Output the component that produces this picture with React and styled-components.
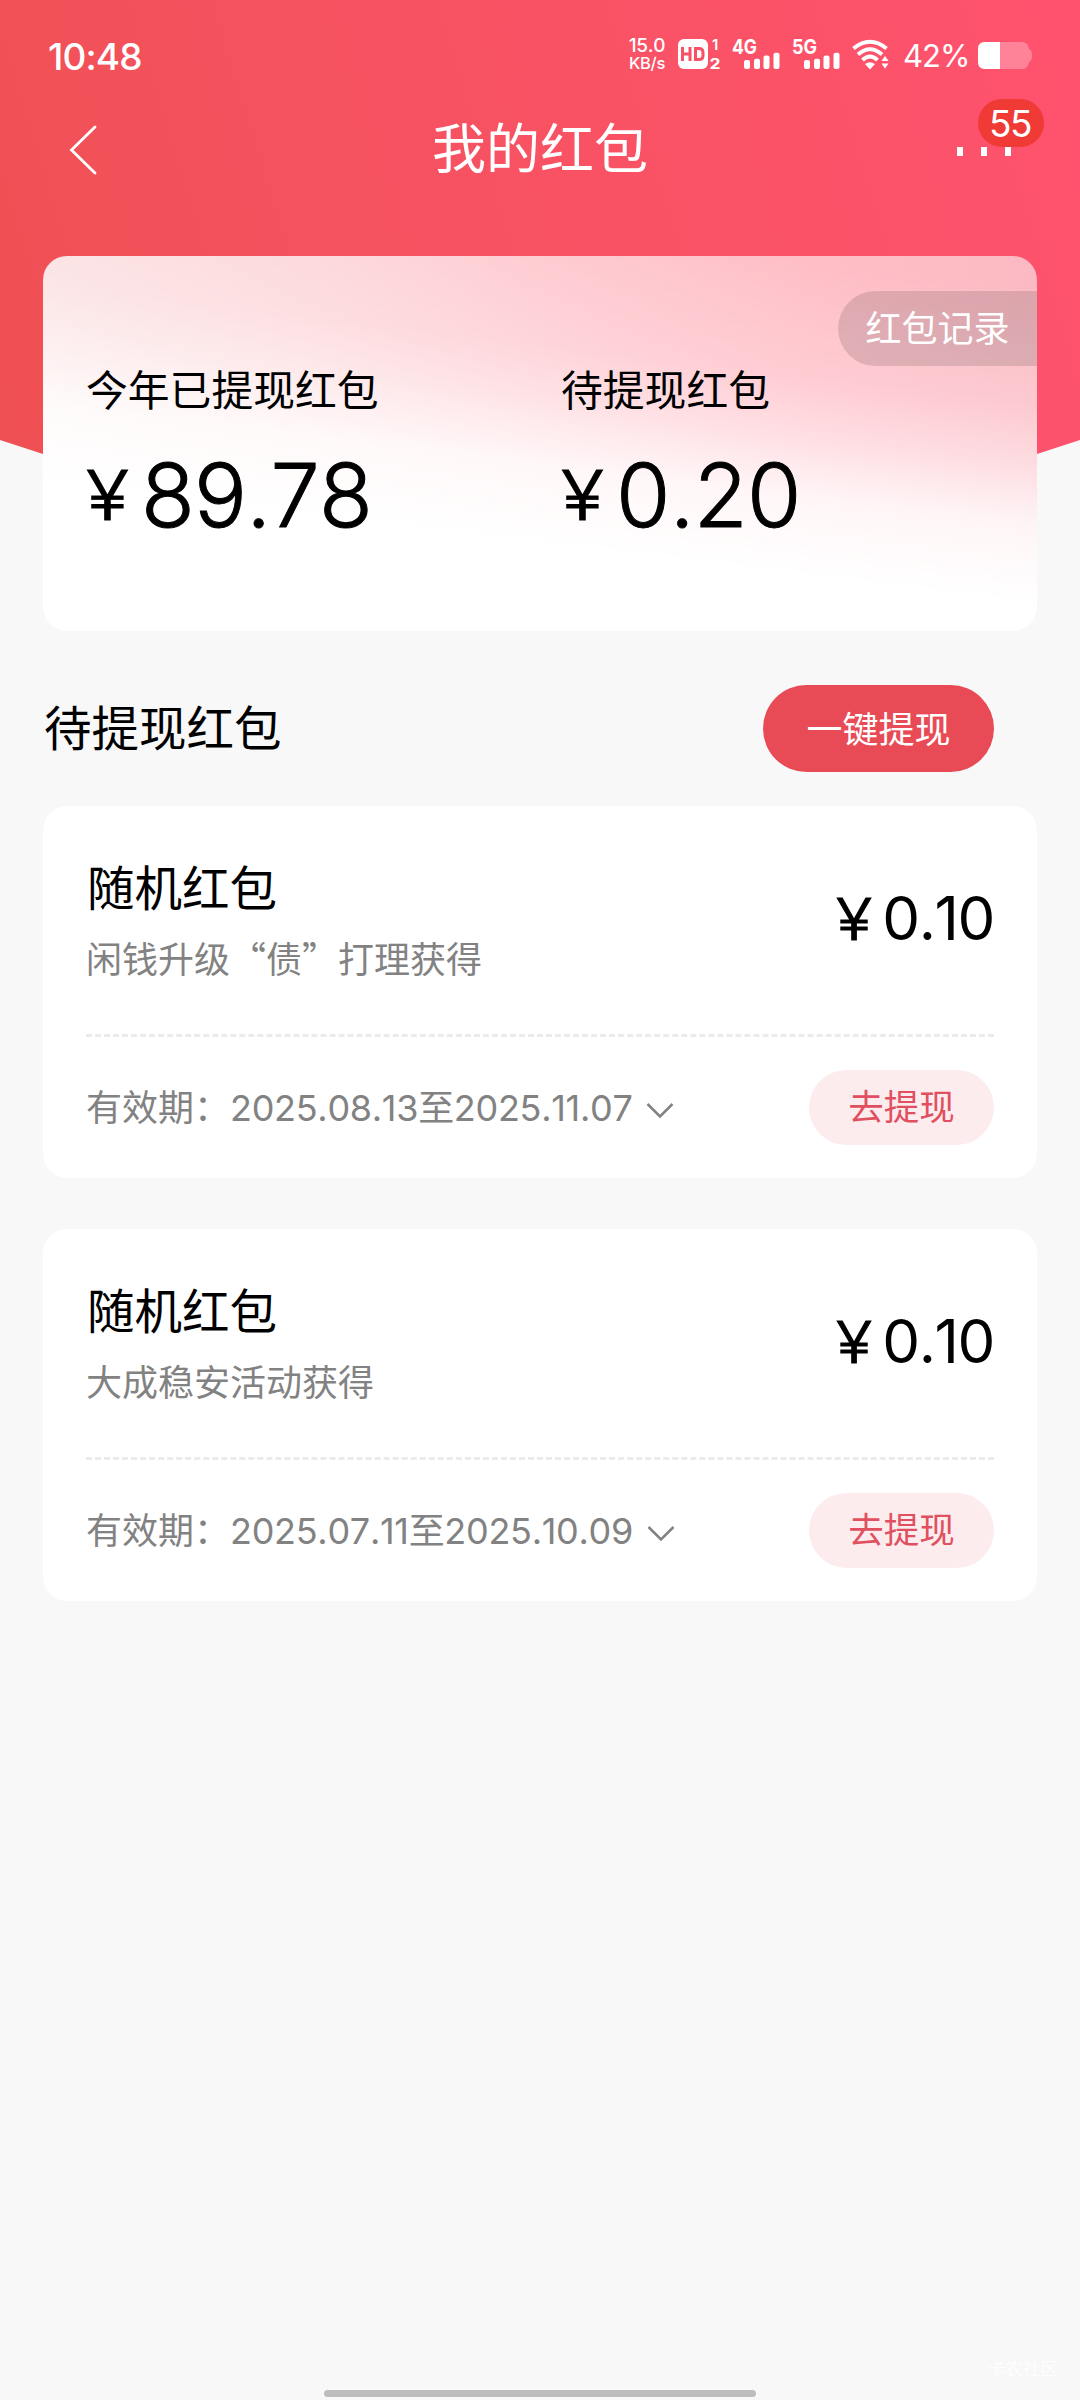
import styled, { createGlobalStyle } from "styled-components";

const GlobalStyle = createGlobalStyle`
    * {
        box-sizing: border-box;
    }

    body {
        margin: 0;
        background: #f8f8f8;
        font-family: Inter, "Noto Sans CJK SC", sans-serif;
        font-kerning: none;
        color: #000;
    }

    p, h1, h2, h3 {
        margin: 0;
        font-weight: 400;
    }

    button {
        border: none;
        padding: 0;
        font-family: inherit;
    }

    svg {
        display: block;
        overflow: visible;
    }
`;

const Page = styled.div`
    position: relative;
    width: 1080px;
    height: 2400px;
    overflow: hidden;
    display: flex;
    flex-direction: column;
    background-color: #f8f8f8;
`;

const Hero = styled.div`
    position: absolute;
    top: 0;
    left: 0;
    width: 1080px;
    height: 500px;
    background: linear-gradient(73deg, #ef5052 0%, #f4525e 30%, #fa5266 65%, #fd526b 85%, #ff526f 100%);
    clip-path: polygon(0 0, 100% 0, 100% 440px, 1037px 454px, 900px 490px, 180px 490px, 43px 454px, 0 440px);
`;

const StatusBar = styled.div`
    position: relative;
    height: 112px;
    padding: 0 48px;
    display: flex;
    justify-content: space-between;
    color: white;
`;

const Time = styled.div`
    padding-top: 34px;
    font-size: 37px;
    line-height: 46px;
    font-weight: 500;
    letter-spacing: -0.9px;
`;

const StatusIcons = styled.div`
    display: flex;
    padding-top: 36px;
    height: 76px;
`;

const Speed = styled.div`
    width: 38px;
    margin-right: 12px;
    padding-top: 1px;
    text-align: center;
    font-size: 19px;
    line-height: 18px;
    font-weight: 500;
    letter-spacing: -0.3px;

    small {
        display: block;
        font-size: 16.5px;
        line-height: 17px;
        letter-spacing: -0.3px;
    }
`;

const Percent = styled.div`
    width: 66px;
    margin: 0 9px 0 14px;
    font-size: 31px;
    line-height: 39px;
    letter-spacing: -1px;
`;

const NavBar = styled.header`
    position: relative;
    height: 144px;
    padding: 0 68px;
    display: grid;
    grid-template-columns: 90px 1fr 90px;
    align-items: start;
    color: white;
`;

const BackButton = styled.button`
    background: none;
    color: white;
    padding-top: 12px;
    width: 40px;
`;

const Title = styled.h1`
    padding-top: 2px;
    text-align: center;
    font-size: 54px;
    line-height: 72px;
`;

const Menu = styled.div`
    position: relative;
    display: flex;
    gap: 18px;
    padding: 35px 0 0 35px;
`;

const Dot = styled.span`
    width: 6px;
    height: 9px;
    background: white;
`;

const Badge = styled.span`
    position: absolute;
    left: 56px;
    top: -13px;
    width: 66px;
    height: 48px;
    padding-right: 2px;
    border-radius: 24px;
    background: #f03a35;
    text-align: center;
    font-size: 37px;
    line-height: 49px;
    letter-spacing: -1.4px;
`;

const Summary = styled.section`
    position: relative;
    height: 375px;
    margin: 0 43px;
    padding: 35px 0 0 43px;
    border-radius: 24px;
    background:
        linear-gradient(187deg, rgba(255, 255, 255, 0) 6%, rgba(255, 255, 255, 0.22) 30%, rgba(255, 255, 255, 0.5) 42%, rgba(255, 255, 255, 0.85) 54%, #fff 70%),
        linear-gradient(90deg, #fbdfe0 0%, #fdd5d8 28%, #fec8cf 52%, #ffbdc6 78%, #fbbac3 100%);
`;

const RecordLink = styled.button`
    display: block;
    margin-left: auto;
    width: 199px;
    height: 75px;
    border-radius: 38px 0 0 38px;
    background: rgba(0, 0, 0, 0.12);
    color: white;
    font-size: 36px;
    line-height: 70px;
`;

const Totals = styled.div`
    display: grid;
    grid-template-columns: 475px 1fr;
`;

const TotalLabel = styled.p`
    margin-top: -5px;
    font-size: 41.8px;
    line-height: 60px;
`;

const TotalAmount = styled.p`
    display: flex;
    align-items: baseline;
    margin-top: 18px;
    font-size: 88px;
    line-height: 112px;
    font-weight: 300;
    letter-spacing: -0.7px;
    -webkit-text-stroke: 1px currentColor;
`;

const Yen = styled.span`
    position: relative;
    top: ${(props) => props.$lift || 0}px;
    width: ${(props) => props.$width}px;
    font-size: ${(props) => props.$size}px;
    font-weight: 300;
    letter-spacing: 0;
    -webkit-text-stroke: 0.9px currentColor;
    transform: scaleX(1.15);
    transform-origin: left;
`;

const SectionHeader = styled.div`
    height: 175px;
    padding: 20px 86px 0 43px;
    display: flex;
    align-items: center;
    justify-content: space-between;
`;

const SectionTitle = styled.h2`
    padding-left: 1px;
    font-size: 47.5px;
    line-height: 70px;
`;

const WithdrawAll = styled.button`
    width: 231px;
    height: 87px;
    padding-bottom: 4px;
    border-radius: 44px;
    background: #e84a56;
    color: white;
    font-size: 36px;
`;

const List = styled.div`
    display: flex;
    flex-direction: column;
    gap: 51px;
    padding: 0 43px;
`;

const Card = styled.article`
    height: 372px;
    padding: 0 43px;
    border-radius: 24px;
    background: white;
`;

const CardTop = styled.div`
    height: 231px;
    padding-top: 48px;
    display: flex;
    justify-content: space-between;
    border-bottom: 3px dashed #ebebeb;
`;

const CardTitle = styled.h3`
    padding-left: 1px;
    font-size: 47.5px;
    line-height: 70px;
`;

const Source = styled.p`
    margin-top: 6px;
    font-family: "Noto Sans CJK SC", sans-serif;
    font-size: 36px;
    line-height: 54px;
    color: #828282;
`;

const Amount = styled.p`
    display: flex;
    align-items: baseline;
    margin-top: 28px;
    font-size: 60px;
    line-height: 72px;
    letter-spacing: -1.4px;
`;

const CardBottom = styled.div`
    padding-top: 33px;
    display: flex;
    align-items: center;
    justify-content: space-between;
`;

const Validity = styled.div`
    display: flex;
    align-items: center;
    gap: 14px;
    font-size: 36px;
    line-height: 54px;
    color: #828282;
`;

const Dates = styled.span`
    letter-spacing: -0.3px;
`;

const WithdrawButton = styled.button`
    width: 185px;
    height: 75px;
    border-radius: 38px;
    background: #fdecee;
    color: #e05060;
    font-size: 35.5px;
    line-height: 72px;
`;

const HomeIndicator = styled.div`
    width: 432px;
    height: 7px;
    margin: auto auto 3px;
    border-radius: 4px;
    background: #bdbdbd;
`;

const Watermark = styled.span`
    position: absolute;
    right: 22px;
    bottom: 18px;
    font-size: 17.5px;
    line-height: 26px;
    color: #fefefe;
`;

const packets = [
    { id: 1, name: "随机红包", source: "闲钱升级“债”打理获得", amount: "0.10", from: "2025.08.13", to: "2025.11.07" },
    { id: 2, name: "随机红包", source: "大成稳安活动获得", amount: "0.10", from: "2025.07.11", to: "2025.10.09" },
];

function Signal({ label }){
    return(
        <svg width="59.500" height="34" viewBox="0 0 59.500 34" fill="currentColor">
            <text x="0" y="18" fontSize="20" fontWeight="700" textLength="25" lengthAdjust="spacingAndGlyphs">{ label }</text>
            <rect x="12" y="24" width="6" height="9" rx="2"/>
            <rect x="22" y="22.700" width="6" height="10.300" rx="2"/>
            <rect x="31.500" y="19.500" width="6" height="13.500" rx="2"/>
            <rect x="41.500" y="16.700" width="6" height="16.300" rx="2"/>
        </svg>
    );
}

function HdIcon(){
    return(
        <svg width="54" height="34" viewBox="0 0 54 34">
            <rect x="0" y="3" width="30" height="30" rx="6" fill="white"/>
            <g fill="none" stroke="#fa5167" strokeWidth="3">
                <path d="M4.500 11v14M12 11v14M4.500 18h7.500"/>
                <path d="M17.500 12.500h3.500q4 0 4 4v3q0 4-4 4h-3.500z"/>
            </g>
            <text x="34" y="14" fontSize="15" fontWeight="600" fill="white">1</text>
            <text x="31.500" y="32.500" fontSize="14" fontWeight="700" fill="white" textLength="11" lengthAdjust="spacingAndGlyphs">2</text>
        </svg>
    );
}

function WifiIcon(){
    return(
        <svg width="38" height="34" viewBox="0 0 38 34" fill="none" stroke="white" strokeWidth="3.900">
            <path d="M2.500 12.500Q19 -1 35.500 12.500"/>
            <path d="M7 18.500Q19 8 31 18.500"/>
            <path d="M11.500 24Q19 17 26.500 24"/>
            <path d="M14 28Q19 24.500 24 28L19 33.500Z" fill="white" stroke="none"/>
            <path d="M30.500 25L34 20L37.500 25ZM30.500 27.500L34 32.500L37.500 27.500Z" fill="white" stroke="none"/>
        </svg>
    );
}

function BatteryIcon(){
    return(
        <svg width="54" height="34" viewBox="0 0 54 34">
            <path d="M7 6H44Q50 6 51 13Q54 14 54 19.500Q54 25 51 26Q50 33 44 33H7Q0 33 0 26V13Q0 6 7 6Z" fill="#ff8398"/>
            <path d="M7 6H22V33H7Q0 33 0 26V13Q0 6 7 6Z" fill="white"/>
        </svg>
    );
}

function Packet({ packet }){
    return(
        <Card>
            <CardTop>
                <div>
                    <CardTitle>{ packet.name }</CardTitle>
                    <Source>{ packet.source }</Source>
                </div>
                <Amount><Yen $size={ 58 } $width={ 46 }>¥</Yen>{ packet.amount }</Amount>
            </CardTop>
            <CardBottom>
                <Validity>
                    <span>有效期：<Dates>{ packet.from }至{ packet.to }</Dates></span>
                    <svg width="28" height="18" viewBox="0 0 28 18" fill="none" stroke="currentColor" strokeWidth="2.500">
                        <path d="M1.500 5L14 17.500L26.500 5"/>
                    </svg>
                </Validity>
                <WithdrawButton>去提现</WithdrawButton>
            </CardBottom>
        </Card>
    );
}

export default function App(){
    return(
        <Page>
            <GlobalStyle/>
            <Hero/>
            <StatusBar>
                <Time>10:48</Time>
                <StatusIcons>
                    <Speed>15.0<small>KB/s</small></Speed>
                    <HdIcon/>
                    <Signal label="4G"/>
                    <Signal label="5G"/>
                    <WifiIcon/>
                    <Percent>42%</Percent>
                    <BatteryIcon/>
                </StatusIcons>
            </StatusBar>
            <NavBar>
                <BackButton>
                    <svg width="30" height="52" viewBox="0 0 30 52" fill="none" stroke="currentColor" strokeWidth="2.800" strokeLinecap="round">
                        <path d="M27 3L3.500 26L27 49"/>
                    </svg>
                </BackButton>
                <Title>我的红包</Title>
                <Menu>
                    <Dot/><Dot/><Dot/>
                    <Badge>55</Badge>
                </Menu>
            </NavBar>
            <Summary>
                <RecordLink>红包记录</RecordLink>
                <Totals>
                    <div>
                        <TotalLabel>今年已提现红包</TotalLabel>
                        <TotalAmount><Yen $size={ 69 } $width={ 55 } $lift={ -7 }>¥</Yen>89.78</TotalAmount>
                    </div>
                    <div>
                        <TotalLabel>待提现红包</TotalLabel>
                        <TotalAmount><Yen $size={ 69 } $width={ 55 } $lift={ -7 }>¥</Yen>0.20</TotalAmount>
                    </div>
                </Totals>
            </Summary>
            <SectionHeader>
                <SectionTitle>待提现红包</SectionTitle>
                <WithdrawAll>一键提现</WithdrawAll>
            </SectionHeader>
            <List>
                { packets.map( (packet) => <Packet key={ packet.id } packet={ packet }/> )}
            </List>
            <HomeIndicator/>
            <Watermark>卡农社区</Watermark>
        </Page>
    );
}
